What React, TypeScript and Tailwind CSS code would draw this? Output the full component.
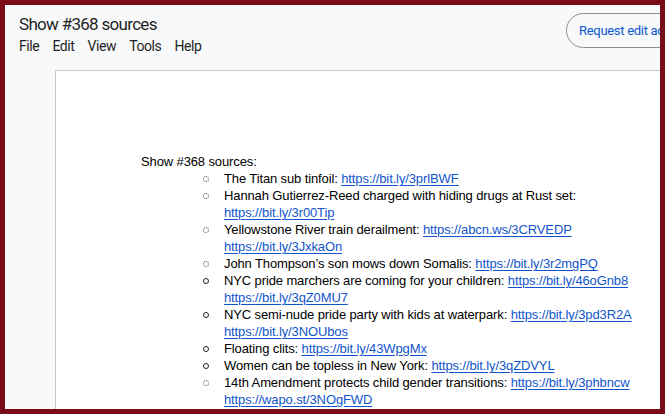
import React from "react";

type Line = { text?: string; link?: string };
type Item = { lines: Line[]; bullet: "dotted" | "circle" };

const ITEMS: Item[] = [
  { bullet: "dotted", lines: [{ text: "The Titan sub tinfoil: ", link: "https://bit.ly/3prlBWF" }] },
  {
    bullet: "dotted",
    lines: [
      { text: "Hannah Gutierrez-Reed charged with hiding drugs at Rust set:" },
      { link: "https://bit.ly/3r00Tip" }
    ]
  },
  {
    bullet: "dotted",
    lines: [
      { text: "Yellowstone River train derailment: ", link: "https://abcn.ws/3CRVEDP" },
      { link: "https://bit.ly/3JxkaOn" }
    ]
  },
  {
    bullet: "dotted",
    lines: [{ text: "John Thompson\u2019s son mows down Somalis: ", link: "https://bit.ly/3r2mgPQ" }]
  },
  {
    bullet: "circle",
    lines: [
      { text: "NYC pride marchers are coming for your children: ", link: "https://bit.ly/46oGnb8" },
      { link: "https://bit.ly/3qZ0MU7" }
    ]
  },
  {
    bullet: "circle",
    lines: [
      { text: "NYC semi-nude pride party with kids at waterpark: ", link: "https://bit.ly/3pd3R2A" },
      { link: "https://bit.ly/3NOUbos" }
    ]
  },
  { bullet: "circle", lines: [{ text: "Floating clits: ", link: "https://bit.ly/43WpgMx" }] },
  {
    bullet: "circle",
    lines: [{ text: "Women can be topless in New York: ", link: "https://bit.ly/3qZDVYL" }]
  },
  {
    bullet: "dotted",
    lines: [
      { text: "14th Amendment protects child gender transitions: ", link: "https://bit.ly/3phbncw" },
      { link: "https://wapo.st/3NOgFWD" }
    ]
  }
];

const MENU = ["File", "Edit", "View", "Tools", "Help"];

function Bullet({ kind }: { kind: Item["bullet"] }) {
  if (kind === "circle") {
    return <span className="mt-[6px] block h-[6px] w-[6px] rounded-full border-[1.5px] border-[#222]" />;
  }
  return <span className="mt-[6px] block h-[6px] w-[6px] rounded-full border border-dotted border-[#555]" />;
}

export default function App() {
  return (
    <div className="h-[414px] w-[665px] overflow-hidden bg-[#7a0c1a] p-[5px]">
      <div className="flex h-full flex-col overflow-hidden bg-[#f8f9fa]">
        <div className="flex h-[65px] shrink-0">
          <div className="flex-1 pl-[14px] font-['Roboto',sans-serif] text-[#1f1f1f]">
            <div className="pt-[8px] text-[17px] leading-[22px] tracking-[-0.7px]">Show #368 sources</div>
            <div className="mt-[2px] flex gap-[13px] text-[14px] leading-[18px] tracking-[-0.4px]">
              {MENU.map((m) => (
                <span key={m}>{m}</span>
              ))}
            </div>
          </div>
          <div className="mt-[8px] -mr-[36px] flex h-[35px] w-[130px] shrink-0 items-center whitespace-nowrap rounded-full border border-[#8e918f] pl-[12px] font-['Roboto',sans-serif] text-[13px] tracking-[-0.3px] text-[#0b57d0]">
            Request edit access
          </div>
        </div>
        <div className="ml-[50px] flex-1 border-l border-t border-[#c7c7c7] bg-white pl-[85px] pt-[82px] font-['Liberation_Sans',Arial,sans-serif] text-[13px] leading-[17px] tracking-[-0.12px] text-black">
          <div>Show #368 sources:</div>
          {ITEMS.map((item, i) => (
            <div key={i} className="flex">
              <div className="flex w-[83px] shrink-0 justify-end pr-[15px]">
                <Bullet kind={item.bullet} />
              </div>
              <div className="whitespace-nowrap">
                {item.lines.map((line, j) => (
                  <div key={j}>
                    {line.text}
                    {line.link && (
                      <a className="text-[#1155cc] underline underline-offset-2" href="#">
                        {line.link}
                      </a>
                    )}
                  </div>
                ))}
              </div>
            </div>
          ))}
        </div>
      </div>
    </div>
  );
}
